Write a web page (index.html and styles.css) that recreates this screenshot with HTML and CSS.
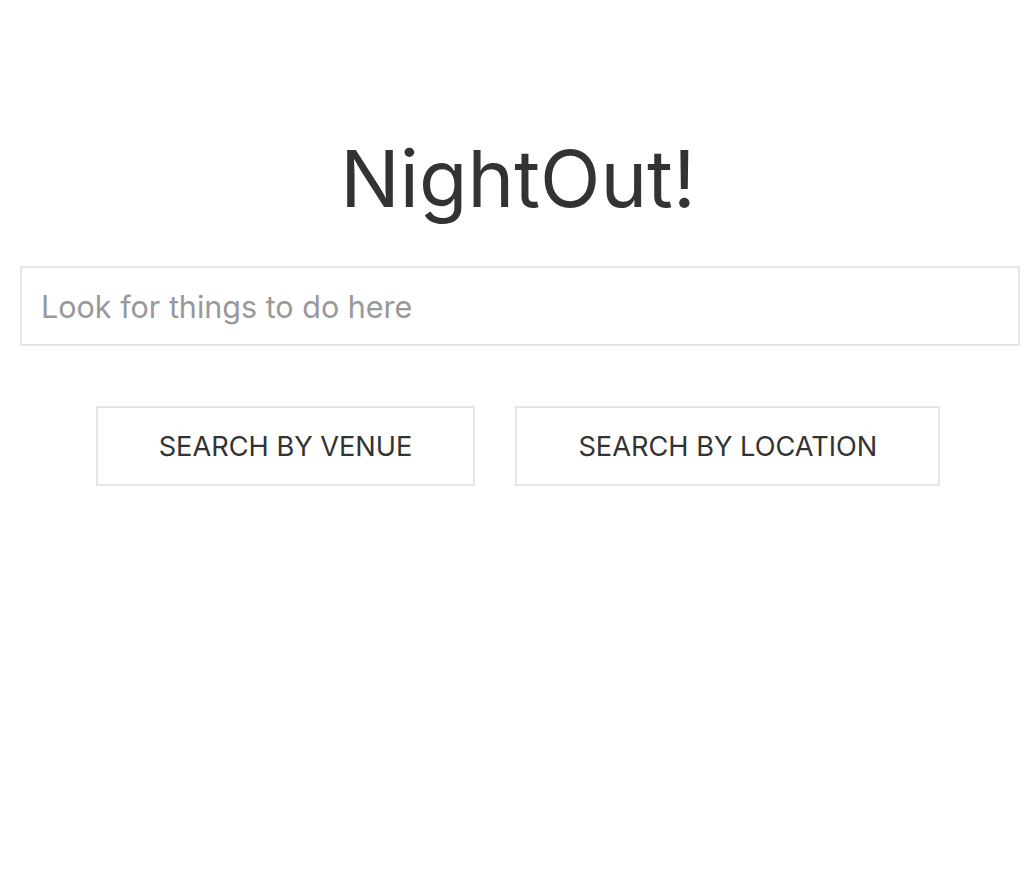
FILE: index.html
```html
<!DOCTYPE html>
<html lang="en">
<head>
<meta charset="utf-8">
<title>NightOut!</title>
<link rel="stylesheet" href="styles.css">
</head>
<body>
<main class="app">
  <h1 class="title">NightOut!</h1>
  <input class="search" type="text" placeholder="Look for things to do here">
  <div class="actions">
    <button class="btn">SEARCH BY VENUE</button>
    <button class="btn">SEARCH BY LOCATION</button>
  </div>
</main>
</body>
</html>
```
FILE: styles.css
```css
html, body {
  margin: 0;
  padding: 0;
  background: #ffffff;
}
body {
  font-family: Inter, "Liberation Sans", sans-serif;
  color: #333333;
}
.app {
  display: flex;
  flex-direction: column;
  align-items: center;
  padding-top: 128px;
}
.title {
  margin: 0;
  font-size: 79px;
  font-weight: 400;
  line-height: 100px;
  color: #333333;
}
.search {
  box-sizing: border-box;
  margin: 38px 0 0 4px;
  width: 1000px;
  height: 80px;
  border: 2px solid #e5e5e5;
  padding: 0 19px;
  font-family: inherit;
  font-size: 30.5px;
  color: #333333;
  outline: none;
  background: #fff;
}
.search::placeholder {
  color: #999999;
}
.actions {
  display: flex;
  gap: 40px;
  margin-top: 60px;
}
.btn {
  box-sizing: border-box;
  height: 80px;
  padding: 0 61px;
  border: 2px solid #e5e5e5;
  background: #ffffff;
  font-family: inherit;
  font-size: 27.2px;
  color: #333333;
  cursor: pointer;
}
```
